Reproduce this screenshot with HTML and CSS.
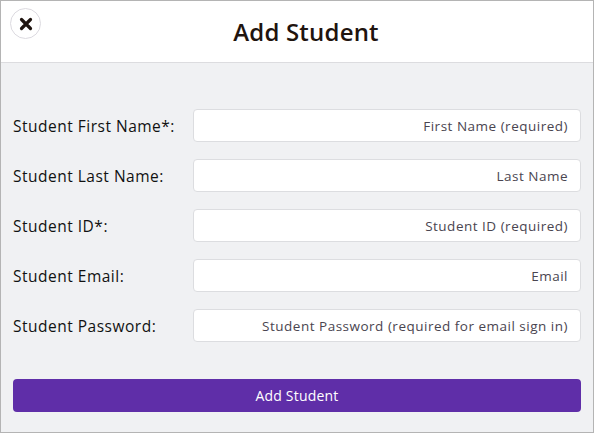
FILE: index.html
```html
<!DOCTYPE html>
<html>
<head>
<meta charset="utf-8">
<link rel="stylesheet" href="styles.css">
</head>
<body>
<div class="modal">
  <header class="head">
    <button class="close" aria-label="Close">
      <svg width="14" height="14" viewBox="0 0 14 14"><path d="M2.5 2.5 L11.5 11.5 M11.5 2.5 L2.5 11.5" stroke="#1f140f" stroke-width="3.2" stroke-linecap="round"/></svg>
    </button>
    <h1 class="title">Add Student</h1>
  </header>
  <main class="body">
    <form class="form">
      <div class="row"><label class="label">Student First Name*:</label><input class="field" placeholder="First Name (required)"></div>
      <div class="row"><label class="label">Student Last Name:</label><input class="field" placeholder="Last Name"></div>
      <div class="row"><label class="label">Student ID*:</label><input class="field" placeholder="Student ID (required)"></div>
      <div class="row"><label class="label">Student Email:</label><input class="field" placeholder="Email"></div>
      <div class="row"><label class="label">Student Password:</label><input class="field" placeholder="Student Password (required for email sign in)"></div>
      <button type="button" class="submit">Add Student</button>
    </form>
  </main>
</div>
</body>
</html>
```
FILE: styles.css
```css
* { box-sizing: border-box; }
html, body { margin: 0; padding: 0; }
body { width: 594px; height: 433px; font-family: "Open Sans", "Noto Sans", sans-serif; color: #1c1410; }
.modal { width: 594px; height: 433px; border: 1px solid #b4b4b4; display: flex; flex-direction: column; background: #f0f1f3; }
.head { height: 62px; background: #fff; border-bottom: 1px solid #dcdcdf; display: flex; align-items: center; position: relative; }
.close { position: absolute; left: 9px; top: 7px; width: 31px; height: 31px; border-radius: 50%; border: 1px solid #dcdae0; background: #fff; display: flex; align-items: center; justify-content: center; padding: 0; }
.title { margin: 0 0 0 18px; flex: 1; text-align: center; font-size: 24px; font-weight: 600; color: #1f140f; letter-spacing: 0.2px; }
.body { flex: 1; padding: 46px 12px 0 12px; }
.form { display: flex; flex-direction: column; gap: 17px; }
.row { display: flex; align-items: center; height: 33px; }
.label { width: 180px; font-size: 15.5px; color: #111; letter-spacing: 0.5px; }
.field { flex: 1; height: 33px; border: 1px solid #dcdde0; border-radius: 4px; background: #fff; text-align: right; padding: 0 12px; font-family: inherit; font-size: 13.5px; letter-spacing: 0.5px; color: #333; outline: none; }
.field::placeholder { color: #4a4550; }
.submit { margin-top: 20px; height: 33px; border: none; border-radius: 4px; background: #5f2ea8; color: #fff; font-family: inherit; font-size: 14px; letter-spacing: 0.2px; }
```
